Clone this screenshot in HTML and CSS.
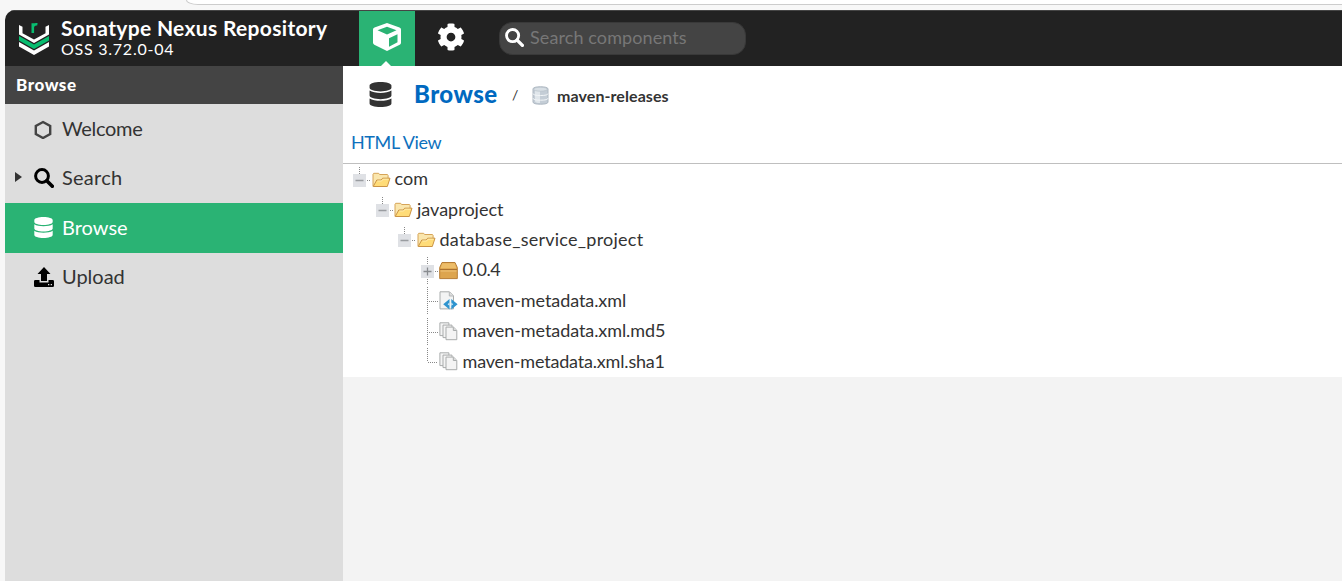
FILE: index.html
```html
<!DOCTYPE html>
<html lang="en">
<head>
<meta charset="utf-8">
<title>Sonatype Nexus Repository</title>
<link rel="stylesheet" href="styles.css">
</head>
<body>
<svg class="defs" aria-hidden="true">
  <symbol id="database" viewBox="0 0 448 512"><path d="M448 73.143v45.714C448 159.143 347.667 192 224 192S0 159.143 0 118.857V73.143C0 32.857 100.333 0 224 0s224 32.857 224 73.143zM448 176v102.857C448 319.143 347.667 352 224 352S0 319.143 0 278.857V176c48.125 33.143 136.208 48.572 224 48.572S399.874 209.143 448 176zm0 160v102.857C448 479.143 347.667 512 224 512S0 479.143 0 438.857V336c48.125 33.143 136.208 48.572 224 48.572S399.874 369.143 448 336z"/></symbol>
  <symbol id="magnifier" viewBox="0 0 20 20"><circle cx="8" cy="8" r="6.4" fill="none" stroke="currentColor" stroke-width="3"/><path d="M12.8 12.8l5.500 5.500" stroke="currentColor" stroke-width="3.6" stroke-linecap="round"/></symbol>
  <symbol id="folder" viewBox="0 0 19 16"><path d="M1 14.200V2.200l.7-.9h5l.9 1.200h7.800l.7.7v4" fill="#fae6ad" stroke="#d6a458"/><path d="M1.200 14.500L4.800 8h4.400l1.500-1.800h7.300l-2.700 8.300z" fill="#ffdc78" stroke="#cb9445"/><path d="M5.400 9h4.200l1.500-1.800h5.500" fill="none" stroke="#fff0bd" stroke-width=".8"/></symbol>
  <symbol id="pages" viewBox="0 0 19 19"><g fill="#f4f4f4" stroke="#a9acac"><path d="M.9.8h9v12.800h-9z"/><path d="M4 3.100h9v12.500H4z"/><path d="M7 5.100h7.500l3.300 3.200v9.400H7z"/><path d="M14.300 5.200v3.300h3.300" fill="#ddd"/></g></symbol>
  <symbol id="collapse" viewBox="0 0 22 27"><path d="M9.500 1v7M17 14.500h3" stroke="#888" stroke-dasharray="1 1"/><path fill="#dfe1e5" d="M3 8h13v13H3z"/><path d="M5.500 14.500h8" stroke="#999ca0" stroke-width="1.400"/></symbol>
  <symbol id="expand" viewBox="0 0 22 27"><path d="M9.500 0v27M17 14.500h3" stroke="#888" stroke-dasharray="1 1"/><path fill="#dfe1e5" d="M3 8h13v13H3z"/><path d="M5.500 14.500h8M9.500 10.500v8" stroke="#888b8f" stroke-width="1.300"/></symbol>
  <symbol id="tee" viewBox="0 0 22 27"><path d="M9.500 0v27M11 14.500h9" stroke="#888" stroke-dasharray="1 1"/></symbol>
  <symbol id="elbow" viewBox="0 0 22 27"><path d="M9.500 0v14M10 14.500h10" stroke="#888" stroke-dasharray="1 1"/></symbol>
</svg>
<div class="browser-strip"><div class="address-edge"></div></div>
<div class="app">
  <header class="header">
    <svg class="logo" viewBox="0 0 32 34"><path d="M1 4l3.500 1.800v6.400L16 18.600l11.500-6.400V5.800L31 4v9.400L16 22 1 13.400z" fill="#fff"/><path d="M1 15l15 8.600L31 15v4.400L16 28 1 19.400z" fill="#08bd70"/><path d="M1 21l15 8.600L31 21v4.400L16 34 1 25.400z" fill="#fff"/><path d="M14.800 12V2.200M14.800 6c.4-2 2-3.100 4.600-2.700" fill="none" stroke="#08bd70" stroke-width="2.600"/></svg>
    <div class="product"><div class="product-name">Sonatype Nexus Repository</div><div class="version">OSS 3.72.0-04</div></div>
    <div class="mode active"><svg class="cube" viewBox="0 0 28 28"><path fill="#fff" d="M14 0l12.500 4.600q1.500.6 1.500 2v13.200q0 1.300-1.300 1.900L14 28 1.300 21.700Q0 21 0 19.800V6.600q0-1.400 1.500-2z"/><path fill="#2ab374" d="M14 3.700l9.500 3.500L14 11.600 4.500 7.200zM16 15.200l8.500-3.900v8L16 23.700z"/></svg><span class="pointer"></span></div>
    <div class="mode"><svg class="gear" viewBox="0 0 512 512"><path fill="#fff" d="M487.400 315.700l-42.600-24.600c4.300-23.200 4.300-47 0-70.200l42.600-24.600c4.900-2.800 7.100-8.600 5.500-14-11.100-35.600-30-67.800-54.700-94.600-3.800-4.100-10-5.100-14.800-2.300L380.800 110c-17.900-15.400-38.500-27.300-60.800-35.100V25.800c0-5.600-3.900-10.500-9.400-11.700-36.700-8.200-74.300-7.800-109.200 0-5.500 1.200-9.400 6.100-9.400 11.700V75c-22.200 7.900-42.800 19.800-60.800 35.100L88.700 85.500c-4.900-2.800-11-1.900-14.800 2.300-24.700 26.700-43.600 58.900-54.700 94.600-1.700 5.400.6 11.200 5.500 14L67.300 221c-4.300 23.200-4.300 47 0 70.200l-42.600 24.600c-4.900 2.800-7.100 8.600-5.500 14 11.100 35.600 30 67.800 54.700 94.600 3.800 4.100 10 5.100 14.800 2.300l42.600-24.600c17.900 15.400 38.500 27.300 60.800 35.100v49.200c0 5.600 3.900 10.500 9.400 11.700 36.700 8.200 74.300 7.800 109.200 0 5.500-1.200 9.400-6.100 9.400-11.700v-49.200c22.200-7.900 42.800-19.800 60.800-35.100l42.600 24.600c4.900 2.800 11 1.900 14.800-2.300 24.700-26.700 43.600-58.900 54.700-94.600 1.500-5.500-.7-11.300-5.600-14.100zM256 336c-44.100 0-80-35.900-80-80s35.900-80 80-80 80 35.900 80 80-35.900 80-80 80z"/></svg></div>
    <div class="search"><svg><use href="#magnifier"/></svg><span class="placeholder">Search components</span></div>
  </header>
  <div class="body">
    <nav class="sidebar">
      <div class="sidebar-title">Browse</div>
      <div class="item"><span class="arrow"></span><svg class="item-icon" viewBox="0 0 20 20"><path d="M9 3l7.200 4v8L9 19l-7.200-4V7z" fill="none" stroke="#444" stroke-width="2.400"/></svg><span class="label welcome">Welcome</span></div>
      <div class="item"><span class="arrow visible"></span><svg class="item-icon"><use href="#magnifier"/></svg><span class="label find">Search</span></div>
      <div class="item selected"><span class="arrow"></span><svg class="item-icon db"><use href="#database"/></svg><span class="label">Browse</span></div>
      <div class="item"><span class="arrow"></span><svg class="item-icon" viewBox="0 0 20 20"><path d="M10 0l6.500 7H13v7H7V7H3.500zM1.300 13H5.500v2.500h9V13h4.200q1.300 0 1.300 1.300v4.400q0 1.300-1.300 1.300H1.300Q0 20 0 18.700v-4.400Q0 13 1.300 13z"/><path d="M14 17h1.300v1.300H14zM16.700 17H18v1.300h-1.300z" fill="#ddd"/></svg><span class="label">Upload</span></div>
    </nav>
    <main class="content">
      <div class="panel">
        <div class="breadcrumb"><svg class="crumb-db"><use href="#database"/></svg><h1>Browse</h1><span class="slash">/</span><svg class="repo-icon" viewBox="0 0 17 19"><path d="M1 3q0-2.200 7.500-2.200T16 3v13q0 2.200-7.500 2.200T1 16z" fill="#c4cdd6" stroke="#adb7c1"/><path d="M3 4h5v13Q3 17 3 15z" fill="#e0e6eb"/><ellipse cx="8.500" cy="3.200" rx="7" ry="2" fill="#d8dfe5" stroke="#b6c0c9" stroke-width=".7"/><path d="M1 7.500q0 2 7.500 2t7.500-2M1 12.200q0 2 7.500 2t7.500-2" fill="none" stroke="#f3f6f8"/></svg><span class="repo-name">maven-releases</span></div>
        <div class="toolbar"><a>HTML View</a></div>
        <div class="tree">
          <div class="row"><svg class="branch"><use href="#collapse"/></svg><svg class="node folder"><use href="#folder"/></svg><span class="name">com</span></div>
          <div class="row level-1"><svg class="branch"><use href="#collapse"/></svg><svg class="node folder"><use href="#folder"/></svg><span class="name">javaproject</span></div>
          <div class="row level-2"><svg class="branch"><use href="#collapse"/></svg><svg class="node folder"><use href="#folder"/></svg><span class="name project">database_service_project</span></div>
          <div class="row level-3"><svg class="branch"><use href="#expand"/></svg><svg class="node" viewBox="0 0 19 19"><path d="M3 1.500h13l2.300 5v11.100H.7V6.500z" fill="#dda54e" stroke="#b77d36"/><path d="M3.300 2.200h12.400l1.700 5H1.600z" fill="#edbd69"/><path d="M1 8.500h17" stroke="#aa7130"/><path d="M1.500 10h16" stroke="#efc47b"/></svg><span class="name number">0.0.4</span></div>
          <div class="row level-3"><svg class="branch"><use href="#tee"/></svg><svg class="node" viewBox="0 0 19 19"><path d="M1 .8h9.500l4 4v13.100H1z" fill="#f3f4f4" stroke="#a9acac"/><path d="M10.300 1v4h4" fill="#ddd" stroke="#b5b7b8"/><path d="M10.500 8v10.500L4.200 13.200zM12.300 8v10.500l6.300-5.300z" fill="#2f94cf"/><path d="M10.500 11.600v3.200l-1.900-1.600zM12.300 11.600v3.200l1.900-1.600z" fill="#d7edf7"/></svg><span class="name file">maven-metadata.xml</span></div>
          <div class="row level-3"><svg class="branch"><use href="#tee"/></svg><svg class="node"><use href="#pages"/></svg><span class="name file">maven-metadata.xml.md5</span></div>
          <div class="row level-3"><svg class="branch"><use href="#elbow"/></svg><svg class="node"><use href="#pages"/></svg><span class="name hash">maven-metadata.xml.sha1</span></div>
        </div>
      </div>
    </main>
  </div>
</div>
</body>
</html>
```
FILE: styles.css
```css
* { box-sizing: border-box; }
body { margin: 0; height: 581px; overflow: hidden; background: #f7f7f7; color: #333; font-family: Lato, "Liberation Sans", sans-serif; }
svg { display: block; flex: none; }
span, h1, a { white-space: nowrap; }
.defs { display: none; }
.browser-strip { height: 10px; padding-left: 186px; }
.address-edge { height: 5px; background: #fff; border: 1px solid #ccc; border-top: 0; border-right: 0; border-bottom-left-radius: 12px 5px; }
.app { height: 571px; margin-left: 5px; display: flex; flex-direction: column; overflow: hidden; border-top-left-radius: 10px; }
.header { height: 56px; flex: none; display: flex; background: #222; border-top: 1px solid #454545; color: #fff; }
.logo { width: 32px; height: 34px; margin: 10px 11px 0 13px; }
.product { width: 298px; padding-top: 5px; }
.product-name { font-size: 21px; line-height: 24px; font-weight: 700; white-space: nowrap; letter-spacing: .32px; }
.version { font-size: 16px; line-height: 18px; letter-spacing: .75px; }
.mode { width: 56px; height: 55px; display: flex; justify-content: center; padding-top: 12px; position: relative; }
.mode.active { background: #2ab374; }
.cube { width: 28px; height: 28px; }
.gear { width: 28px; height: 28px; margin-left: 16px; }
.pointer { position: absolute; left: 22px; bottom: 0; border: 5px solid transparent; border-bottom-color: #fff; border-top: 0; }
.search { width: 247px; height: 33px; margin: 11px 0 0 28px; display: flex; align-items: center; border-radius: 13px; background: #444; border: 1px solid #393939; }
.search svg { width: 19px; height: 19px; margin: -3px 6px 0 5px; }
.placeholder { font-size: 18px; line-height: 24px; color: #777; letter-spacing: .1px; margin-top: -3px; }
.body { flex: 1; display: flex; }
.sidebar { width: 338px; background: #ddd; color: #333; }
.sidebar-title { height: 38px; background: #444; color: #fff; padding-left: 11px; font-size: 17px; line-height: 37px; font-weight: 900; letter-spacing: .55px; }
.item { height: 49.5px; display: flex; align-items: center; padding-left: 10px; font-size: 20px; }
.label { padding-bottom: 2px; }
.label.welcome { letter-spacing: -.3px; }
.label.find { letter-spacing: .25px; }
.arrow { width: 7px; margin-right: 12px; }
.arrow.visible { border: 5px solid transparent; border-left: 7px solid #333; border-right: 0; margin-top: -3px; }
.item-icon { width: 20px; height: 20px; margin-right: 8px; color: #000; }
.selected { background: #2ab374; color: #fff; }
.item-icon.db { width: 19px; height: 21px; fill: #fff; margin-right: 9px; }
.content { flex: 1; min-width: 0; background: #f3f3f3; }
.panel { height: 311px; background: #fff; }
.breadcrumb { height: 57px; display: flex; align-items: center; padding-left: 26px; }
.crumb-db { width: 23px; height: 25px; fill: #333; margin-right: 22px; }
h1 { width: 98px; margin: -2px 0 0; font-size: 24px; line-height: 30px; font-weight: 900; letter-spacing: .45px; color: #0069c0; }
.slash { width: 19px; font-size: 14px; }
.repo-icon { width: 17px; height: 19px; margin: 2px 8px 0 1px; }
.repo-name { font-size: 16px; line-height: 20px; font-weight: 700; margin-top: 2px; letter-spacing: .08px; }
.toolbar { height: 41px; padding: 7px 0 0 8px; border-bottom: 1px solid #bfbfbf; color: #0d70bd; font-size: 18px; line-height: 24px; letter-spacing: -.4px; }
.tree { font-size: 18px; line-height: 24px; }
.row { height: 30.4px; display: flex; align-items: center; padding-left: 7px; }
.name { padding-bottom: 2px; }
.name.project { letter-spacing: .25px; }
.name.number { letter-spacing: -.4px; }
.name.file { letter-spacing: -.08px; }
.name.hash { letter-spacing: -.18px; }
.level-1 { padding-left: 29.500px; }
.level-2 { padding-left: 52px; }
.level-3 { padding-left: 74.500px; }
.branch { width: 22px; height: 27px; }
.node { width: 19px; height: 19px; margin: 0 4px 0 -1px; }
.node:not(.folder) { margin-right: 5px; }
.node.folder { height: 16px; margin: 1px 4px 0 -.5px; }
```
